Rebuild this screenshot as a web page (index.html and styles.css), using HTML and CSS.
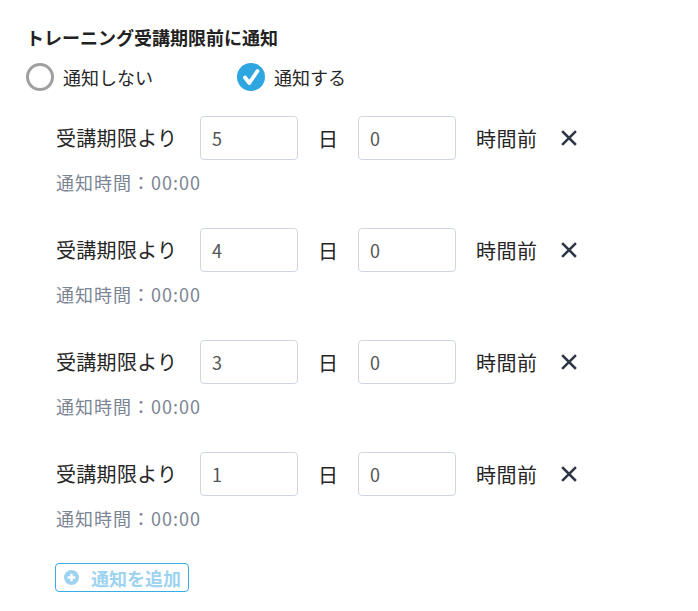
FILE: index.html
```html
<!DOCTYPE html>
<html lang="ja">
<head>
<meta charset="utf-8">
<link rel="stylesheet" href="styles.css">
</head>
<body>
<div class="panel">
  <h2 class="title">トレーニング受講期限前に通知</h2>
  <div class="radios">
    <label class="radio">
      <span class="radio-circle"></span>
      <span class="radio-label">通知しない</span>
    </label>
    <label class="radio radio-on">
      <span class="radio-circle checked">
        <svg width="28" height="28" viewBox="0 0 28 28"><path d="M8 14.5 L12.3 20 L20.5 8" fill="none" stroke="#fff" stroke-width="3.8" stroke-linecap="round" stroke-linejoin="round"/></svg>
      </span>
      <span class="radio-label">通知する</span>
    </label>
  </div>

  <div class="items">
    <div class="item">
      <div class="line">
        <span class="lbl">受講期限より</span>
        <div class="input">5</div>
        <span class="unit">日</span>
        <div class="input">0</div>
        <span class="unit2">時間前</span>
        <svg class="close" width="16" height="16" viewBox="0 0 16 16"><path d="M2 2 L14 14 M14 2 L2 14" stroke="#2d3748" stroke-width="2.5" stroke-linecap="square"/></svg>
      </div>
      <div class="hint">通知時間：00:00</div>
    </div>
    <div class="item">
      <div class="line">
        <span class="lbl">受講期限より</span>
        <div class="input">4</div>
        <span class="unit">日</span>
        <div class="input">0</div>
        <span class="unit2">時間前</span>
        <svg class="close" width="16" height="16" viewBox="0 0 16 16"><path d="M2 2 L14 14 M14 2 L2 14" stroke="#2d3748" stroke-width="2.5" stroke-linecap="square"/></svg>
      </div>
      <div class="hint">通知時間：00:00</div>
    </div>
    <div class="item">
      <div class="line">
        <span class="lbl">受講期限より</span>
        <div class="input">3</div>
        <span class="unit">日</span>
        <div class="input">0</div>
        <span class="unit2">時間前</span>
        <svg class="close" width="16" height="16" viewBox="0 0 16 16"><path d="M2 2 L14 14 M14 2 L2 14" stroke="#2d3748" stroke-width="2.5" stroke-linecap="square"/></svg>
      </div>
      <div class="hint">通知時間：00:00</div>
    </div>
    <div class="item">
      <div class="line">
        <span class="lbl">受講期限より</span>
        <div class="input">1</div>
        <span class="unit">日</span>
        <div class="input">0</div>
        <span class="unit2">時間前</span>
        <svg class="close" width="16" height="16" viewBox="0 0 16 16"><path d="M2 2 L14 14 M14 2 L2 14" stroke="#2d3748" stroke-width="2.5" stroke-linecap="square"/></svg>
      </div>
      <div class="hint">通知時間：00:00</div>
    </div>
  </div>

  <button class="add">
    <svg width="15" height="15" viewBox="0 0 14 14"><circle cx="7" cy="7" r="7" fill="#9dd3f0"/><path d="M7 3.4 V10.6 M3.4 7 H10.6" stroke="#fff" stroke-width="2.2"/></svg>
    <span>通知を追加</span>
  </button>
</div>
</body>
</html>
```

FILE: styles.css
```css
* { box-sizing: border-box; }
html, body {
  margin: 0;
  padding: 0;
  background: #fff;
}
body {
  font-family: "Noto Sans CJK JP", "Noto Sans", sans-serif;
  color: #333;
}
.panel {
  padding: 25px 0 0 26px;
}
.title {
  margin: 0;
  font-size: 18px;
  font-weight: 700;
  line-height: 24px;
  color: #222;
}
.radios {
  display: flex;
  align-items: center;
  margin-top: 13px;
  height: 30px;
}
.radio {
  display: flex;
  align-items: center;
  gap: 9px;
}
.radio-on {
  margin-left: 84px;
}
.radio-circle {
  width: 28px;
  height: 28px;
  border-radius: 50%;
  border: 3px solid #a0a0a0;
  display: flex;
  align-items: center;
  justify-content: center;
}
.radio-circle.checked {
  border: none;
  background: #2ea7e0;
}
.radio-label {
  font-size: 18px;
  line-height: 24px;
  color: #262626;
}
.items {
  margin-top: 24px;
  padding-left: 30px;
  display: flex;
  flex-direction: column;
  gap: 34px;
}
.line {
  display: flex;
  align-items: center;
  height: 44px;
}
.lbl {
  font-size: 20px;
  line-height: 28px;
  width: 144px;
  letter-spacing: 0.3px;
  color: #262626;
}
.input {
  width: 98px;
  height: 44px;
  border: 1px solid #cfd6df;
  border-radius: 4px;
  padding-left: 11px;
  display: flex;
  align-items: center;
  font-size: 18px;
  color: #555;
}
.unit {
  font-size: 20px;
  width: 60px;
  padding-left: 20px;
  color: #262626;
}
.unit2 {
  font-size: 20px;
  padding-left: 20px;
  width: 105px;
  letter-spacing: 0.5px;
  color: #262626;
}
.close {
  display: block;
}
.hint {
  margin-top: 10px;
  font-size: 18px;
  line-height: 24px;
  letter-spacing: 1px;
  color: #7b8594;
}
.add {
  margin: 33px 0 0 29px;
  height: 29px;
  width: 134px;
  border: 1px solid #38ace4;
  border-radius: 4px;
  background: #fff;
  display: flex;
  align-items: center;
  gap: 12px;
  padding: 0 0 0 8px;
  font-family: "Noto Sans CJK JP", sans-serif;
  font-size: 18px;
  font-weight: 700;
  color: #9dd3f0;
}
.add svg { display: block; }
```
